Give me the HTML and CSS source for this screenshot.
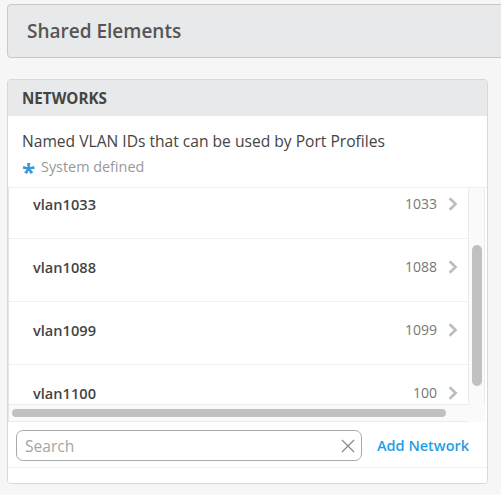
FILE: index.html
```html
<!DOCTYPE html>
<html>
<head>
<meta charset="utf-8">
<link rel="stylesheet" href="styles.css">
</head>
<body>
<div class="page">
  <div class="title-card"><h1 class="title">Shared Elements</h1></div>
  <section class="card">
    <header class="card-head">NETWORKS</header>
    <div class="desc">
      <p class="desc-text">Named VLAN IDs that can be used by Port Profiles</p>
      <p class="legend"><span class="star">*</span>System defined</p>
    </div>
    <div class="list">
      <div class="viewport">
        <div class="rows">
          <div class="row"><span class="name">vlan1033</span><span class="num">1033</span><svg class="chev" width="10" height="14" viewBox="0 0 10 14"><path d="M1.6 1.2 L7.6 7 L1.6 12.8" fill="none" stroke="#bdbdbd" stroke-width="2.6"/></svg></div>
          <div class="row"><span class="name">vlan1088</span><span class="num">1088</span><svg class="chev" width="10" height="14" viewBox="0 0 10 14"><path d="M1.6 1.2 L7.6 7 L1.6 12.8" fill="none" stroke="#bdbdbd" stroke-width="2.6"/></svg></div>
          <div class="row"><span class="name">vlan1099</span><span class="num">1099</span><svg class="chev" width="10" height="14" viewBox="0 0 10 14"><path d="M1.6 1.2 L7.6 7 L1.6 12.8" fill="none" stroke="#bdbdbd" stroke-width="2.6"/></svg></div>
          <div class="row"><span class="name">vlan1100</span><span class="num">100</span><svg class="chev" width="10" height="14" viewBox="0 0 10 14"><path d="M1.6 1.2 L7.6 7 L1.6 12.8" fill="none" stroke="#bdbdbd" stroke-width="2.6"/></svg></div>
        </div>
      </div>
      <div class="vtrack"><div class="vthumb"></div></div>
      <div class="htrack"><div class="hthumb"></div></div>
      <div class="corner"></div>
    </div>
    <div class="toolbar">
      <div class="search">
        <span class="placeholder">Search</span>
        <svg class="clear" width="14" height="14" viewBox="0 0 14 14"><path d="M1 1 L13 13 M13 1 L1 13" stroke="#8a8a8a" stroke-width="1.3" fill="none"/></svg>
      </div>
      <a class="add">Add Network</a>
    </div>
    <div class="foot"></div>
  </section>
</div>
</body>
</html>
```

FILE: styles.css
```css
* { box-sizing: border-box; }
html, body { margin: 0; padding: 0; }
body {
  background: #f6f6f6;
  font-family: "Open Sans", "Liberation Sans", sans-serif;
  width: 501px;
  height: 495px;
  overflow: hidden;
}
.page {
  padding: 4px 0 0 7px;
}
.title-card {
  width: 520px;
  height: 54px;
  background: #e8e9ea;
  border: 1px solid #c9c9c9;
  border-radius: 4px;
  display: flex;
  align-items: center;
  padding-left: 19px;
}
.title {
  margin: 0;
  font-size: 19px;
  font-weight: 600;
  color: #555;
  margin-top: -1px;
}
.card {
  margin-top: 21px;
  width: 481px;
  background: #fff;
  border: 1px solid #d8d8d8;
  border-radius: 4px;
  overflow: hidden;
}
.card-head {
  height: 36px;
  background: #e8e9ea;
  display: flex;
  align-items: center;
  padding-left: 14px;
  font-size: 15.2px;
  font-weight: 700;
  color: #444;
}
.desc {
  padding: 14px 14px 0 14px;
  height: 71px;
}
.desc-text {
  margin: 0;
  font-size: 15.6px;
  line-height: 22px;
  color: #444;
}
.legend {
  margin: 0;
  font-size: 14.4px;
  line-height: 20px;
  color: #999;
  display: flex;
  align-items: center;
}
.star {
  color: #3a97d6;
  font-weight: 700;
  font-size: 24px;
  line-height: 20px;
  width: 19px;
  padding-top: 10px;
}
.list {
  display: grid;
  grid-template-columns: 459px 17px;
  grid-template-rows: 216px 18px;
  border-top: 1px solid #eeeeee;
  border-left: 1px solid #e6e6e6;
}
.viewport {
  overflow: hidden;
  background: #fff;
}
.rows {
  margin-top: -12px;
}
.row {
  height: 63px;
  border-bottom: 1px solid #f0f0f0;
  display: flex;
  align-items: flex-start;
  padding: 18px 10px 0 24px;
}
.name {
  font-size: 14.6px;
  line-height: 20px;
  font-weight: 600;
  color: #444;
  flex: 1;
}
.num {
  font-size: 14px;
  line-height: 20px;
  color: #777;
}
.chev {
  margin-left: 11px;
  margin-top: 3px;
}
.vtrack {
  background: #fafafa;
  border-left: 1px solid #ececec;
  border-right: 1px solid #ececec;
  padding: 57px 0 0 3px;
}
.vthumb {
  width: 10px;
  height: 141px;
  background: #c1c1c1;
  border-radius: 5px;
}
.htrack {
  background: #fafafa;
  border-top: 1px solid #ececec;
  border-bottom: 1px solid #ececec;
  padding: 4px 0 0 3px;
}
.hthumb {
  width: 434px;
  height: 8px;
  background: #c1c1c1;
  border-radius: 4px;
}
.corner {
  background: #fafafa;
}
.toolbar {
  height: 46px;
  display: flex;
  align-items: center;
  padding-left: 8px;
  padding-top: 2px;
  border-bottom: 1px solid #f0f0f0;
}
.search {
  width: 346px;
  height: 31px;
  border: 1px solid #a9a9a9;
  border-radius: 7px;
  display: flex;
  align-items: center;
  padding: 0 6px 0 8px;
}
.placeholder {
  flex: 1;
  font-size: 15.6px;
  color: #a5a5a5;
}
.add {
  margin-left: 15px;
  font-size: 14.5px;
  font-weight: 600;
  color: #1f9fe6;
}
.foot {
  height: 15px;
  background: #fff;
}
```
